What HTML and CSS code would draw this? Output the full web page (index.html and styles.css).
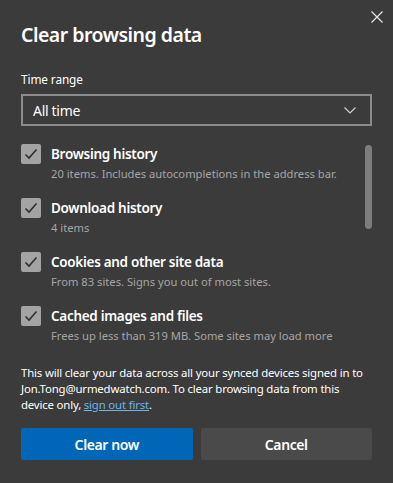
FILE: index.html
```html
<!DOCTYPE html>
<html lang="en">
<head>
  <meta charset="UTF-8" />
  <title>Clear browsing data</title>
  <link rel="stylesheet" href="styles.css">
</head>
<body>
  <div class="dialog">
    <button class="close-btn" title="Close">
      <svg width="12" height="12" viewBox="0 0 12 12"><path d="M0.5 0.5L11.5 11.5M11.5 0.5L0.5 11.5" stroke="#e6e6e6" stroke-width="1.2" fill="none"/></svg>
    </button>

    <h1>Clear browsing data</h1>

    <div class="field-label">Time range</div>
    <div class="select">
      <span>All time</span>
      <svg width="12" height="7" viewBox="0 0 12 7"><path d="M0.5 0.5L6 6L11.5 0.5" stroke="#d0d0d0" stroke-width="1.2" fill="none"/></svg>
    </div>

    <div class="list-wrap">
      <div class="list">
        <div class="item">
          <div class="checkbox"><svg width="14" height="12" viewBox="0 0 14 12"><path d="M1.5 6.5L5 10L12.5 1.5" stroke="#2e2e2e" stroke-width="1.6" fill="none"/></svg></div>
          <div class="item-text">
            <div class="item-title">Browsing history</div>
            <div class="item-desc">20 items. Includes autocompletions in the address bar.</div>
          </div>
        </div>
        <div class="item">
          <div class="checkbox"><svg width="14" height="12" viewBox="0 0 14 12"><path d="M1.5 6.5L5 10L12.5 1.5" stroke="#2e2e2e" stroke-width="1.6" fill="none"/></svg></div>
          <div class="item-text">
            <div class="item-title">Download history</div>
            <div class="item-desc">4 items</div>
          </div>
        </div>
        <div class="item">
          <div class="checkbox"><svg width="14" height="12" viewBox="0 0 14 12"><path d="M1.5 6.5L5 10L12.5 1.5" stroke="#2e2e2e" stroke-width="1.6" fill="none"/></svg></div>
          <div class="item-text">
            <div class="item-title">Cookies and other site data</div>
            <div class="item-desc">From 83 sites. Signs you out of most sites.</div>
          </div>
        </div>
        <div class="item">
          <div class="checkbox"><svg width="14" height="12" viewBox="0 0 14 12"><path d="M1.5 6.5L5 10L12.5 1.5" stroke="#2e2e2e" stroke-width="1.6" fill="none"/></svg></div>
          <div class="item-text">
            <div class="item-title">Cached images and files</div>
            <div class="item-desc">Frees up less than 319 MB. Some sites may load more</div>
          </div>
        </div>
      </div>
      <div class="scrollbar"></div>
    </div>

    <p class="note">This will clear your data across all your synced devices signed in to Jon.Tong@urmedwatch.com. To clear browsing data from this device only, <a href="#">sign out first</a>.</p>

    <div class="buttons">
      <button class="btn btn-primary">Clear now</button>
      <button class="btn btn-secondary">Cancel</button>
    </div>
  </div>
</body>
</html>
```

FILE: styles.css
```css
body {
  margin: 0;
  background: #3b3b3b;
  font-family: 'Noto Sans', 'Open Sans', sans-serif;
  color: #ffffff;
}

.dialog {
  position: relative;
  width: 393px;
  height: 483px;
  box-sizing: border-box;
  padding: 21px 21px 0 21px;
}

.close-btn {
  position: absolute;
  top: 11px;
  right: 10px;
  width: 12px;
  height: 12px;
  padding: 0;
  border: none;
  background: none;
  display: flex;
}

h1 {
  margin: 0;
  font-size: 19.5px;
  line-height: 28px;
  font-weight: 600;
  letter-spacing: -0.5px;
  color: #ffffff;
}

.field-label {
  margin-top: 21px;
  font-size: 11.8px;
  line-height: 18px;
  letter-spacing: -0.1px;
  color: #ffffff;
}

.select {
  margin-top: 6px;
  height: 32px;
  box-sizing: border-box;
  border: 2px solid #8c8c8c;
  display: flex;
  align-items: center;
  justify-content: space-between;
  padding: 0 14px 0 10px;
  font-size: 14px;
  letter-spacing: -0.3px;
  color: #ffffff;
}

.list-wrap {
  display: flex;
  margin-top: 18px;
  height: 210px;
  overflow: hidden;
}

.list {
  flex: 1;
  display: flex;
  flex-direction: column;
  gap: 14px;
}

.item {
  display: flex;
  gap: 10px;
}

.checkbox {
  width: 20px;
  height: 20px;
  flex: none;
  border-radius: 2px;
  background: #a3a3a3;
  display: flex;
  align-items: center;
  justify-content: center;
}

.item-title {
  font-size: 13.5px;
  line-height: 20px;
  font-weight: 600;
  letter-spacing: -0.3px;
  color: #ffffff;
}

.item-desc {
  font-size: 11.2px;
  line-height: 20px;
  color: #a6a6a6;
}

.scrollbar {
  width: 7px;
  height: 84px;
  margin-top: 1px;
  border-radius: 4px;
  background: #7d7d7d;
  flex: none;
}

.note {
  margin: 11px 0 0 0;
  font-size: 11.4px;
  line-height: 16px;
  letter-spacing: -0.17px;
  color: #ffffff;
}

.note a {
  color: #6cb4ee;
  text-decoration: underline;
}

.buttons {
  display: flex;
  gap: 8px;
  margin-top: 15px;
}

.btn {
  flex: 1;
  height: 32px;
  border: none;
  border-radius: 2px;
  font-family: 'Noto Sans', 'Open Sans', sans-serif;
  font-size: 14px;
  font-weight: 600;
  letter-spacing: -0.4px;
  color: #ffffff;
}

.btn-primary {
  background: #0067b8;
}

.btn-secondary {
  background: #4a4a4a;
}
```
